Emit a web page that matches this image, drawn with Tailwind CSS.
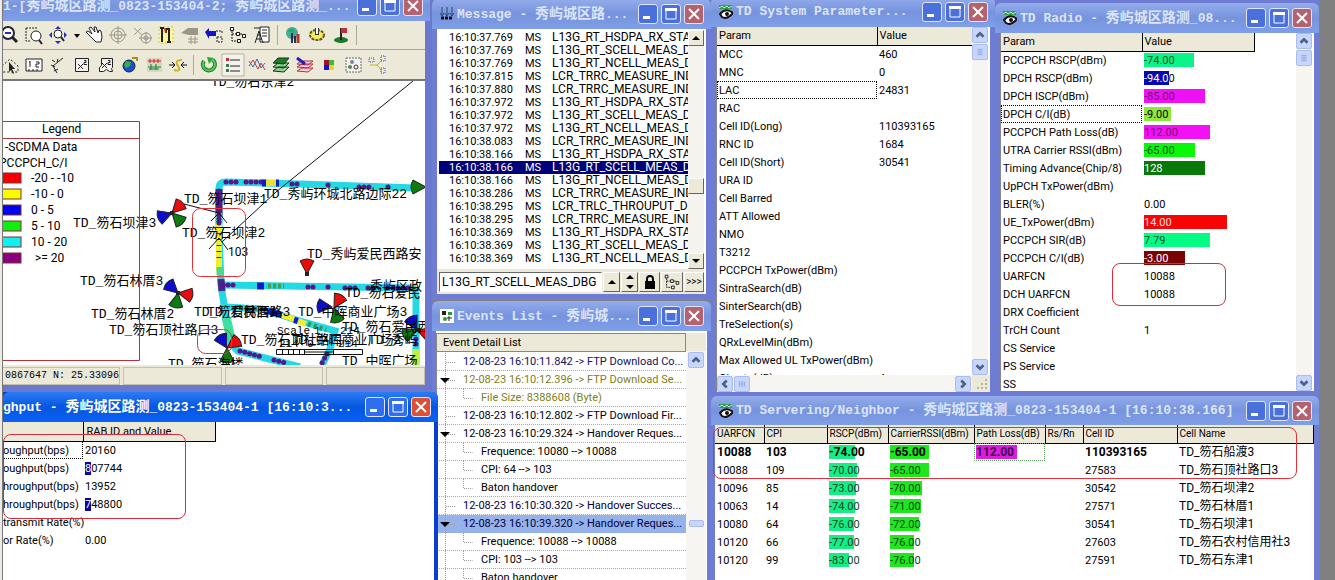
<!DOCTYPE html>
<html lang="zh-CN">
<head>
    <meta charset="UTF-8" />
    <meta name="viewport" content="width=device-width, initial-scale=1.0" />
    <title>TD Drive Test</title>
    <script src="https://cdn.jsdelivr.net/npm/@tailwindcss/browser@4"></script>
</head>

<body class="bg-[#808080] text-black text-[11px] leading-[13px] font-['Roboto','Noto_Sans_CJK_SC',sans-serif]">

  <!-- Shared symbols -->
  <svg class="hidden">
    <symbol id="eye" viewBox="0 0 14 14">
      <path d="M0 0h13v4H0z" fill="#2f9a4a"/><path d="M0 3l3-2 2 2 3-2 2 2 3-2" stroke="#c8f0d0" fill="none"/>
      <path d="M1 9Q7 2 14 8Q8 15 3 12Z" fill="#fff" stroke="#111" stroke-width="2"/><circle cx="8" cy="9" r="2" fill="#111"/>
    </symbol>
    <symbol id="up" viewBox="0 0 16 16"><path d="M4 10l4-4 4 4" fill="none" stroke="#4d6185" stroke-width="3"/></symbol>
    <symbol id="down" viewBox="0 0 16 16"><path d="M4 6l4 4 4-4" fill="none" stroke="#4d6185" stroke-width="3"/></symbol>
    <symbol id="left" viewBox="0 0 16 16"><path d="M10 4L6 8l4 4" fill="none" stroke="#4d6185" stroke-width="3"/></symbol>
    <symbol id="right" viewBox="0 0 16 16"><path d="M6 4l4 4-4 4" fill="none" stroke="#4d6185" stroke-width="3"/></symbol>
    <symbol id="gripv" viewBox="0 0 16 16"><path d="M5 5h6M5 7h6M5 9h6M5 11h6" stroke="#8ba4e0"/></symbol>
    <symbol id="griph" viewBox="0 0 16 16"><path d="M5 5v6M7 5v6M9 5v6M11 5v6" stroke="#8ba4e0"/></symbol>
    <symbol id="tree" viewBox="0 0 20 20"><path d="M4 3v13h5M4 9h6M12 9h3" fill="none" stroke="#111" stroke-dasharray="2 1"/><path d="M2.500 2.500h3v3h-3zM8.500 7.500h3v3h-3zM14.500 9.500h3v3h-3zM9.500 14.500h3v3h-3z" fill="#fff" stroke="#111"/></symbol>
  </svg>

  <div class="grid grid-cols-[3px_429fr_279fr_608fr_16px] h-screen min-h-[580px] overflow-hidden">
    <div class="bg-[#eeeae4] border-r border-[#777]"></div>

    <!-- Left: map and throughput -->
    <div class="flex flex-col min-w-0 bg-[#6a78d0]">
      <section class="h-[391px] shrink-0 flex flex-col mr-[2px]">
        <header data-title="1-[|秀屿城区路测|_0823-153404-2; |秀屿城区路测|_..." data-icon="" class="-mt-[9px] h-[30px] shrink-0"></header>
        <div class="flex-1 min-h-0 mr-[5px] mb-[6px] flex flex-col bg-[#ece9d8]">
          <div class="h-[29px] flex items-center border-b border-[#aca899] overflow-hidden">
            <div class="flex items-center -ml-[5px]" id="tools1"></div>
          </div>
          <div class="h-[31px] flex items-center border-b-2 border-[#777] overflow-hidden">
            <div class="flex items-center -ml-[5px]" id="tools2"></div>
          </div>
          <div class="flex-1 min-h-0 bg-white overflow-hidden">
            <svg class="w-full h-full font-['Liberation_Mono','Noto_Sans_CJK_SC',monospace] text-[13px]">
              <defs><path id="wedge" d="M0 0L-7 -13Q0 -17 7 -13Z" stroke="#222" stroke-width="1"/></defs>
              <g transform="translate(-3 -82)">
                <!-- drive route -->
                <g fill="none" stroke="#24d8e4" stroke-width="7">
                  <path d="M219 235V189Q219 183 226 183L300 185L416 189"/>
                  <path d="M219 235L221 286L226 318L232 346L238 352L300 368"/>
                  <path d="M222 286L412 289Q416 290 416 300V366"/>
                  <path d="M226 308L262 310L300 322L335 332L330 350L322 366"/>
                </g>
                <path d="M226 318L231 340" stroke="#3de0a0" stroke-width="9"/>
                <path d="M219 190V218M221 280L222 292" stroke="#44268c" stroke-width="7"/>
                <path d="M219 221V272" stroke="#f0ee30" stroke-width="6"/>
                <path d="M219 214V224M220 268V276" stroke="#4ad890" stroke-width="7"/>
                <path d="M416 350V366" stroke="#bdf03c" stroke-width="7"/>
                <g fill="none" stroke="#53188a" stroke-width="5" stroke-linecap="round" stroke-dasharray="0 5">
                  <path d="M226 183H238M246 183H262M292 185L300 185M328 186H332M359 188H370M388 188H392"/>
                  <path d="M223 286H238M308 288H314M328 288H332M345 289H358M368 289H376M388 289H412"/>
                  <path d="M240 352L262 358M274 361L286 364M416 340V350M327 355L322 364"/>
                  <path d="M219 192V228" stroke-dasharray="0 4"/>
                </g>
                <path d="M264 184H276" stroke="#e9e22f" stroke-width="6"/>
                <path d="M262 184H266M276 184H279M257 287H264" stroke="#1217d0" stroke-width="7"/>
                <path d="M268 287H284" stroke="#46a04a" stroke-width="5" stroke-dasharray="3 2"/>
                <path d="M268 312L282 316M294 321L298 322" stroke="#1217d0" stroke-width="6"/>
                <path d="M282 316L294 320M298 322L306 325" stroke="#f0ee30" stroke-width="6"/>
                <path d="M232 309L262 310" stroke="#2c7a55" stroke-width="4" stroke-dasharray="4 3"/>
                <path d="M308 325L326 331" stroke="#2a9a5a" stroke-width="5" stroke-dasharray="3 3"/>
                <path d="M219 222V262" stroke="#333" stroke-width="5" stroke-dasharray="1 5"/>
                <path d="M413 82L276 193L222 243M184 205L219 214M211 222l8-8 8 10M209 250l10-11 9 12" fill="none" stroke="#111"/>

                <!-- cell sectors -->
                <g fill="#e80c0c">
                  <use href="#wedge" transform="translate(172 214) rotate(45)"/>
                  <use href="#wedge" transform="translate(178 294) rotate(100)"/>
                  <use href="#wedge" transform="translate(307 275)"/>
                  <use href="#wedge" transform="translate(334 309) rotate(30)"/>
                  <use href="#wedge" transform="translate(417 331) rotate(110)"/>
                  <use href="#wedge" transform="translate(227 349) rotate(55)"/>
                </g>
                <g fill="#0c0ccc">
                  <use href="#wedge" transform="translate(172 214) rotate(-110)"/>
                  <use href="#wedge" transform="translate(178 294) rotate(-48)"/>
                  <use href="#wedge" transform="translate(332 308) rotate(-85)"/>
                  <use href="#wedge" transform="translate(417 331) rotate(-28)"/>
                  <use href="#wedge" transform="translate(227 349) rotate(-30)"/>
                </g>
                <g fill="#0f7a0f">
                  <use href="#wedge" transform="translate(172 214) rotate(135)"/>
                  <use href="#wedge" transform="translate(178 294) rotate(190)"/>
                  <use href="#wedge" transform="translate(334 309) rotate(165)"/>
                  <use href="#wedge" transform="translate(417 331) rotate(-112)"/>
                  <use href="#wedge" transform="translate(227 349) rotate(180)"/>
                  <use href="#wedge" transform="translate(426 188) rotate(-90)"/>
                </g>
                <path d="M170 212h4v4h-4zM176 292h4v4h-4zM305 273h4v4h-4zM415 329h4v4h-4z" fill="#222"/>

                <!-- site names -->
                <text x="211" y="87">TD_笏石东津2</text>
                <text x="184" y="204">TD_笏石坝津1</text>
                <text x="264" y="199">TD_秀屿环城北路边际22</text>
                <text x="73" y="228">TD_笏石坝津3</text>
                <text x="182" y="238">TD_笏石坝津2</text>
                <text x="228" y="257" class="text-[12px] font-['Roboto']">103</text>
                <text x="307" y="259">TD_秀屿爱民西路安</text>
                <text x="80" y="286">TD_笏石林厝3</text>
                <text x="91" y="319">TD_笏石林厝2</text>
                <text x="109" y="335">TD_笏石顶社路口3</text>
                <text x="370" y="291">秀屿区政</text>
                <text x="345" y="298">TD_笏石爱民</text>
                <text x="194" y="317">TD_笏石林厝1</text>
                <text x="207" y="317">TD_爱民西路3</text>
                <text x="298" y="317">TD_中晖商业广场3</text>
                <text x="342" y="332">TD_笏石爱民西</text>
                <g class="text-[11px]">
                  <text x="277" y="335">Scale</text>
                  <text x="314" y="335">1</text>
                  <text x="340" y="335">214</text>
                  <text x="279" y="348">214</text>
                  <text x="307" y="348">0</text>
                  <text x="338" y="348">214</text>
                </g>
                <text x="241" y="345">TD_笏石顶社路口</text>
                <text x="292" y="345">TD_中晖商业广场2</text>
                <text x="368" y="345">TD_秀屿</text>
                <text x="342" y="366">TD_中晖广场</text>
                <text x="168" y="369">TD_笏石海楼</text>
                <path d="M276.500 350.500h86v5h-86zM282.500 350v5M288.500 350v5M293.500 350v5M299.500 350v5M304.500 350v5M333.500 350v5M304 353h29" fill="none" stroke="#111"/>
                <g fill="none" stroke="#e23038">
                  <rect x="192.500" y="209.500" width="53" height="68" rx="8"/>
                  <rect x="197.500" y="330.500" width="34" height="24" rx="8"/>
                </g>

                <!-- legend -->
                <path d="M3 122.500H139.500V361.500H3M3 139.500H139" fill="none" stroke="#b8303c"/>
                <g class="text-[12px] font-['Roboto']">
                  <text x="42" y="134">Legend</text>
                  <text x="5" y="152">-SCDMA Data</text>
                  <text x="-1" y="168">PCCPCH_C/I</text>
                  <text x="31" y="183">-20 - -10</text>
                  <text x="31" y="199">-10 - 0</text>
                  <text x="31" y="215">0 - 5</text>
                  <text x="31" y="231">5 - 10</text>
                  <text x="31" y="247">10 - 20</text>
                  <text x="35" y="263">&gt;= 20</text>
                </g>
                <g stroke="#7a3030">
                  <rect x="0" y="174" width="21" height="10" fill="#f00000"/>
                  <rect x="0" y="190" width="21" height="10" fill="#fcfc00"/>
                  <rect x="0" y="206" width="21" height="10" fill="#0000f0"/>
                  <rect x="0" y="222" width="21" height="10" fill="#10f010"/>
                  <rect x="0" y="238" width="21" height="10" fill="#10f0f0"/>
                  <rect x="0" y="254" width="21" height="10" fill="#880080"/>
                </g>
              </g>
            </svg>
          </div>
          <div class="h-[20px] flex gap-[3px] pt-[2px] font-['Liberation_Mono',monospace] text-[10px] leading-[16px]">
            <span class="w-[117px] pl-[2px] border border-[#c4c0b0] border-l-0 whitespace-pre">0867647 N: 25.33096</span>
            <span class="flex-1 border border-[#c4c0b0]"></span>
            <span class="flex-1 border border-[#c4c0b0]"></span>
            <span class="flex-1 border border-[#c4c0b0]"></span>
          </div>
        </div>
      </section>

      <section class="flex-1 min-h-0 flex flex-col relative z-10 -mr-[6px] mt-px bg-[#0a3ed0] rounded-tr-md">
        <header data-title="ghput - |秀屿城区路测|_0823-153404-1 [16:10:3..." data-icon="" data-active="1" class="h-[30px] shrink-0"></header>
        <div class="flex-1 min-h-0 mr-[4px] bg-white overflow-hidden relative">
          <table class="table-fixed w-[213px] border-collapse whitespace-nowrap">
            <colgroup><col class="w-[80px]"><col></colgroup>
            <thead>
              <tr class="h-[19px] bg-[#ece9d8] text-left">
                <th class="border-r border-b border-black"></th>
                <th class="font-normal border-r border-b border-black pl-[3px]">RAB ID and Value</th>
              </tr>
            </thead>
            <tbody id="throughput"></tbody>
          </table>
          <div class="absolute left-0 top-[12px] w-[183px] h-[85px] border border-[#d42c3c] rounded-lg"></div>
        </div>
      </section>
    </div>

    <!-- Middle: messages and events -->
    <div class="flex flex-col min-w-0">
      <section class="h-[300px] shrink-0 flex flex-col bg-[#6f7cd4]">
        <header data-title="Message - |秀屿城区路|..." data-icon="msg" class="-mt-px h-[30px] shrink-0"></header>
        <div class="flex-1 min-h-0 mx-[5px] mb-[6px] bg-white flex flex-col pr-[2px]">
          <div class="flex h-[240px]">
            <ul id="messages" class="flex-1 min-w-0 overflow-hidden whitespace-pre pt-[2px] pl-[2px]"></ul>
            <div class="w-[16px] mt-px flex flex-col items-center bg-[#f4f3ee]">
              <button aria-label="Scroll up" class="size-4 bg-[#ece9d8] border border-white border-r-[#666] border-b-[#666] flex justify-center items-center"><svg width="8" height="4"><path d="M0 4L4 0L8 4Z"/></svg></button>
              <div class="flex-[130]"></div>
              <div class="size-4 bg-[#ece9d8] border border-white border-r-[#666] border-b-[#666]"></div>
              <div class="flex-[58]"></div>
              <button aria-label="Scroll down" class="size-4 bg-[#ece9d8] border border-white border-r-[#666] border-b-[#666] flex justify-center items-center"><svg width="8" height="4"><path d="M0 0H8L4 4Z"/></svg></button>
            </div>
          </div>
          <div class="flex-1 flex items-center gap-px bg-[#ece9d8] pl-[2px]">
            <input aria-label="Message name" value="L13G_RT_SCELL_MEAS_DBG" class="flex-1 min-w-0 h-[20px] bg-white border border-[#666] border-r-white border-b-white px-[2px] text-[12px]">
            <button aria-label="Up" class="w-[17px] h-[20px] border border-white border-r-[#666] border-b-[#666] flex justify-center items-center"><svg width="8" height="4"><path d="M0 4L4 0L8 4Z"/></svg></button>
            <button aria-label="Step" class="w-[17px] h-[20px] border border-white border-r-[#666] border-b-[#666] flex justify-center items-center"><svg width="8" height="14"><path d="M0 4L4 0L8 4ZM0 10H8L4 14Z"/></svg></button>
            <button aria-label="Lock" class="w-[21px] h-[20px] border border-white border-r-[#666] border-b-[#666] flex justify-center items-center"><svg width="12" height="14"><path d="M1 6h10v8H1z"/><path d="M3 7V4Q3 1 6 1T9 4V7" fill="none" stroke="#000" stroke-width="2"/></svg></button>
            <button aria-label="Tree" class="w-[22px] h-[20px] border border-white border-r-[#666] border-b-[#666] flex justify-center items-center"><svg width="18" height="18"><use href="#tree"/></svg></button>
            <button class="w-[20px] h-[20px] border border-white border-r-[#666] border-b-[#666] text-[10px] leading-none">&gt;&gt;&gt;</button>
          </div>
        </div>
      </section>

      <section class="flex-1 min-h-0 flex flex-col bg-[#6f7cd4] mt-px">
        <header data-title="Events List - |秀屿城|..." data-icon="evt" class="h-[30px] shrink-0"></header>
        <div class="flex-1 min-h-0 mx-[4px] bg-white flex overflow-hidden pt-[2px] pr-px">
          <div class="flex-1 min-w-0 border-l border-[#888]">
            <div class="h-[19px] leading-[18px] bg-[#ece9d8] border-t border-r border-b border-[#8a877c] pl-[6px]">Event Detail List</div>
            <ul id="events" class="pt-px"></ul>
          </div>
          <div class="w-[20px] flex flex-col items-center bg-[#f6f5f1]">
            <div class="w-full h-[18px] bg-[#ece9d8]"></div>
            <button aria-label="Scroll up" class="size-4 mt-px rounded-xs bg-[#c8d6fb] border border-[#a9bdf0]"><svg width="14" height="14"><use href="#up"/></svg></button>
            <div class="mt-[152px] w-[15px] h-[7px] rounded-xs bg-[#c8d6fb] border border-[#a9bdf0]"></div>
          </div>
        </div>
      </section>
    </div>

    <!-- Right: parameters, radio, neighbours -->
    <div class="flex flex-col min-w-0 bg-[#6a78d0]">
      <div class="h-[396px] shrink-0 grid grid-cols-[284fr_324fr]">
        <section class="min-h-0 min-w-0 flex flex-col bg-[#6f7cd4]">
          <header data-title="TD System Parameter..." data-icon="eye" class="-mt-[3px] h-[30px] shrink-0"></header>
          <div class="flex-1 min-h-0 mx-[5px] mb-[4px] bg-white flex flex-col border-l border-[#888]">
            <div class="flex-1 min-h-0 flex pr-[2px]">
              <div class="flex-1 min-w-0 overflow-hidden">
                <table class="table-fixed w-full border-collapse whitespace-nowrap">
                  <colgroup><col class="w-[160px]"><col></colgroup>
                  <thead>
                    <tr class="h-[18px] bg-[#ece9d8] text-left">
                      <th class="font-normal border-r border-b border-black pl-[2px]">Param</th>
                      <th class="font-normal border-b border-black pl-[2px]">Value</th>
                    </tr>
                  </thead>
                  <tbody id="system"></tbody>
                </table>
              </div>
              <div class="w-[16px] flex flex-col gap-px bg-[#f6f5f1]">
                <button aria-label="Scroll up" class="size-4 rounded-xs bg-[#c8d6fb] border border-[#a9bdf0]"><svg width="14" height="14"><use href="#up"/></svg></button>
                <div class="size-4 rounded-xs bg-[#c8d6fb] border border-[#a9bdf0]"><svg width="14" height="14"><use href="#gripv"/></svg></div>
                <button aria-label="Scroll down" class="size-4 mt-auto rounded-xs bg-[#c8d6fb] border border-[#a9bdf0]"><svg width="14" height="14"><use href="#down"/></svg></button>
              </div>
            </div>
            <div class="h-[17px] flex gap-px items-center bg-[#f6f5f1]">
              <button aria-label="Scroll left" class="size-4 rounded-xs bg-[#c8d6fb] border border-[#a9bdf0]"><svg width="14" height="14"><use href="#left"/></svg></button>
              <div class="size-4 rounded-xs bg-[#c8d6fb] border border-[#a9bdf0]"><svg width="14" height="14"><use href="#griph"/></svg></div>
              <button aria-label="Scroll right" class="size-4 ml-auto rounded-xs bg-[#c8d6fb] border border-[#a9bdf0]"><svg width="14" height="14"><use href="#right"/></svg></button>
              <svg width="18" height="17" class="bg-[#ece9d8]"><path d="M13 4h2v2h-2zM9 8h2v2H9zM13 8h2v2h-2zM5 12h2v2H5zM9 12h2v2H9zM13 12h2v2h-2z" fill="#b8b4a2"/></svg>
            </div>
          </div>
        </section>

        <section class="min-h-0 min-w-0 flex flex-col bg-[#6f7cd4] pt-[3px]">
          <header data-title="TD Radio - |秀屿城区路测|_08..." data-icon="eye" class="h-[30px] shrink-0"></header>
          <div class="flex-1 min-h-0 mx-[5px] mb-[5px] bg-white flex border-l border-[#888] pr-[2px] relative">
            <div class="flex-1 min-w-0 overflow-hidden">
              <table class="table-fixed w-[254px] border-collapse whitespace-nowrap">
                <colgroup><col class="w-[141px]"><col></colgroup>
                <thead>
                  <tr class="h-[18px] bg-[#ece9d8] text-left">
                    <th class="font-normal border-r border-b border-black pl-[2px]">Param</th>
                    <th class="font-normal border-r border-b border-black pl-[2px]">Value</th>
                  </tr>
                </thead>
                <tbody id="radio"></tbody>
              </table>
            </div>
            <div class="w-[16px] flex flex-col gap-px bg-[#f6f5f1]">
              <button aria-label="Scroll up" class="size-4 rounded-xs bg-[#c8d6fb] border border-[#a9bdf0]"><svg width="14" height="14"><use href="#up"/></svg></button>
              <div class="size-4 rounded-xs bg-[#c8d6fb] border border-[#a9bdf0]"><svg width="14" height="14"><use href="#gripv"/></svg></div>
              <button aria-label="Scroll down" class="size-4 mt-auto rounded-xs bg-[#c8d6fb] border border-[#a9bdf0]"><svg width="14" height="14"><use href="#down"/></svg></button>
            </div>
            <div class="absolute left-[111px] top-[230px] w-[114px] h-[43px] border border-[#d42c3c] rounded-lg"></div>
          </div>
        </section>
      </div>

      <section class="flex-1 min-h-0 flex flex-col bg-[#6f7cd4]">
        <header data-title="TD Servering/Neighbor - |秀屿城区路测|_0823-153404-1 [16:10:38.166]" data-icon="eye" class="h-[29px] shrink-0"></header>
        <div class="flex-1 min-h-0 ml-[4px] mr-[5px] bg-white flex flex-col relative">
          <div class="flex-1 min-h-0 overflow-hidden">
            <table class="table-fixed w-full border-collapse whitespace-nowrap">
              <colgroup><col class="w-[49px]"><col class="w-[63px]"><col class="w-[61px]"><col class="w-[86px]"><col class="w-[71px]"><col class="w-[38px]"><col class="w-[94px]"><col></colgroup>
              <thead>
                <tr class="h-[18px] bg-[#ece9d8] text-left text-[10px] [&>th]:font-normal [&>th]:border-r [&>th]:border-b [&>th]:border-black [&>th]:pl-[2px]">
                  <th>UARFCN</th><th>CPI</th><th>RSCP(dBm)</th><th>CarrierRSSI(dBm)</th><th>Path Loss(dB)</th><th>Rs/Rn</th><th>Cell ID</th><th>Cell Name</th>
                </tr>
              </thead>
              <tbody id="cells"></tbody>
            </table>
          </div>
          <div class="h-[6px] flex gap-px bg-[#f6f5f1] overflow-hidden">
            <div class="size-4 rounded-xs bg-[#c8d6fb] border border-[#a9bdf0]"><svg width="14" height="14"><use href="#left"/></svg></div>
            <div class="size-4 rounded-xs bg-[#c8d6fb] border border-[#a9bdf0]"></div>
            <div class="size-4 ml-auto rounded-xs bg-[#c8d6fb] border border-[#a9bdf0]"><svg width="14" height="14"><use href="#right"/></svg></div>
          </div>
          <div class="absolute -left-[2px] top-[2px] w-[584px] h-[52px] border border-[#e2303c] rounded-lg"></div>
        </div>
      </section>
    </div>

    <div class="bg-[#808080]"></div>
  </div>

  <script>
    const $ = id => document.getElementById(id);

    // Title bars. Parts between | are Chinese and set one size larger.
    const titleIcons = {
      eye: '<svg width="14" height="14" class="shrink-0"><use href="#eye"/></svg>',
      evt: '<svg width="14" height="14" class="shrink-0"><path d="M0 0h14v14H0z" fill="#fff"/><path d="M2 2h4v4H2z" fill="#222"/><path d="M8 3h4v3H8z" fill="#2a9a3a"/><circle cx="5" cy="10" r="2" fill="#2a9a3a"/><path d="M7 9h5M9 7v5" stroke="#222"/></svg>',
      msg: '<svg width="14" height="14" class="shrink-0"><path d="M2 0v8M7 0v8M12 0v8M0 6l2 3 2-3M5 6l2 3 2-3M10 6l2 3 2-3" stroke="#2a4a70" fill="none"/><path d="M1 11h12" stroke="#111" stroke-width="3" stroke-dasharray="3 1"/></svg>'
    };
    document.querySelectorAll("header[data-title]").forEach(h => {
      const active = h.dataset.active;
      const text = h.dataset.title.split("|").map((t, i) => i % 2 ? `<span class="text-[14px]">${t}</span>` : t).join("");
      const btn = active ? "bg-[#2f6ef0]" : "bg-[#4a70dc]";
      const close = active ? "bg-[#dc5038]" : "bg-[#b5626e]";
      const box = "size-5 rounded-[3px] border border-[#dfe6fb] flex items-center justify-center";
      h.innerHTML = `
        <div class="h-full flex items-center gap-[3px] pr-[7px] rounded-t-md ${h.dataset.icon ? "pl-[8px]" : ""} ${active ? "bg-linear-to-b from-[#2a7cf4] via-[#0656e0] to-[#0a62f4]" : "bg-linear-to-b from-[#93aceb] via-[#7793dd] to-[#7f9fe8]"}">
          ${titleIcons[h.dataset.icon] || ""}
          <h2 class="flex-1 min-w-0 overflow-hidden whitespace-pre font-bold text-[13px] leading-5 font-['Liberation_Mono','Noto_Sans_CJK_SC',monospace] ${active ? "text-white" : "text-[#dbe5fa]"}">${text}</h2>
          <button aria-label="Minimize" class="${box} ${btn}"><svg width="12" height="12"><path d="M1 8h7v3H1z" fill="#fff"/></svg></button>
          <button aria-label="Maximize" class="${box} ${btn}"><svg width="12" height="12"><path d="M1 1h10v10H1z" fill="none" stroke="#fff"/><path d="M0 0h12v3H0z" fill="#fff"/></svg></button>
          <button aria-label="Close" class="${box} ${close}"><svg width="12" height="12"><path d="M1 1l10 10M11 1L1 11" stroke="#fff" stroke-width="2"/></svg></button>
        </div>`;
    });

    // Toolbar icons, 24px boxes. "|" is a separator.
    const globe = '<circle cx="11" cy="13" r="6" fill="#1a50c8" stroke="#124"/><path d="M8 8l5 1-1 4-4 2-2-3z" fill="#35b04a"/>';
    const row1 = [
      ["Zoom out", '<circle cx="10" cy="10" r="6" fill="#fff" stroke="#223" stroke-width="2"/><path d="M7 10h6" stroke="#2a2ac0" stroke-width="2"/><path d="M14 14l5 5" stroke="#223" stroke-width="3"/>'],
      ["Zoom area", '<path d="M4 5h12M4 5v13h5" fill="none" stroke="#222" stroke-dasharray="2 1"/><circle cx="14" cy="13" r="5" fill="#fff" stroke="#222"/><path d="M17 17l3 4" stroke="#222" stroke-width="2"/>'],
      ["Zoom extent", '<circle cx="12" cy="11" r="4" fill="#fff" stroke="#222"/><path d="M15 14l3 4" stroke="#222" stroke-width="2"/><path d="M9 6l3-3 3 3zM9 18l3 3 3-3zM6 9l-3 3 3 3zM18 9l3 3-3 3z" fill="#2a2ac0"/>'],
      "v",
      ["Pan", '<path d="M7 12L4 9l2-1 4 3-3-6 2-1 4 5-1-5 2 0 2 6 1-3 2 1 1 6-1 5h-5z" fill="#fff" stroke="#222"/>'],
      ["Target", '<circle cx="12" cy="12" r="7" fill="none" stroke="#9a978a"/><circle cx="12" cy="12" r="4" fill="none" stroke="#9a978a"/><path d="M12 3v18M3 12h18" stroke="#9a978a"/>'],
      ["Clear target", '<path d="M4 5l8 7M11 5L4 12" stroke="#9a978a"/><circle cx="16" cy="15" r="5" fill="none" stroke="#9a978a"/><circle cx="16" cy="15" r="2" fill="none" stroke="#9a978a"/><path d="M9 15h13M16 9v12" stroke="#9a978a"/>'],
      ["Route", '<path d="M5 4h14v16H5z" fill="#fdf6a0" stroke="#cc5" stroke-dasharray="2 2"/><path d="M8 19V5M6 5h4M12 10V6h3v13M13 19h4" fill="none" stroke="#222" stroke-width="2"/><path d="M11 5l1 5" stroke="#c22" stroke-width="2"/>'],
      ["Hide", '<path d="M3 10l7-5h10v7H11z" fill="#9a978a"/><path d="M10 16h10M10 19h10M13 13v8M17 13v8" stroke="#9a978a"/>'],
      ["Flag view", '<path d="M3 9l4-4v3h7v5H7v3z" fill="#1212c8"/><path d="M14 8h6v3M15 14h5v5h-5z" fill="none" stroke="#222" stroke-dasharray="2 1"/>'],
      ["Tree", '<use href="#tree" x="2" y="2" width="20" height="20"/>'],
      ["Report", '<path d="M10 4h9v15h-9z" fill="#fff" stroke="#222"/><path d="M12 7h5M12 10h5M12 13h5" stroke="#222"/><path d="M4 5h6M5 20l4-12 4 12M6 16h6M7 12h4" stroke="#222" fill="none"/>'],
      "|",
      ["Statistics", '<circle cx="11" cy="10" r="6" fill="#4a9"/><path d="M6 8l5-3 3 5z" fill="#2a6"/><path d="M11 10v10M14 13v7" stroke="#234" stroke-width="2"/><path d="M17 11v9" stroke="#b33" stroke-width="3"/>'],
      ["Settings", '<ellipse cx="12" cy="12" rx="7" ry="5" fill="#f2e95c" stroke="#665a10" stroke-width="2" stroke-dasharray="3 1"/><path d="M12 5v7" stroke="#333" stroke-width="4"/><path d="M12 5v6" stroke="#fff" stroke-width="2"/>'],
      ["Flag", '<ellipse cx="12" cy="17" rx="7" ry="3" fill="#1d7a2a"/><path d="M12 5v12" stroke="#222" stroke-width="2"/><path d="M12 5h6v5h-6z" fill="#b8323c"/>'],
      "|"
    ];
    const row2 = [
      ["Select", '<path d="M4 13l8-7 8 7v6H4z" fill="none" stroke="#222" stroke-dasharray="2 2"/><path d="M11 9v10l2-2 2 4 1-1-2-4h3z" fill="#222"/>'],
      ["Ruler", '<path d="M4 6h16v12H4z" fill="#fff" stroke="#222"/><path d="M8 8v6M7 9h1M14 9h3v2h-3v3h3M7 18v-2M11 18v-2M15 18v-2" fill="none" stroke="#222"/>'],
      ["Measure", '<path d="M17 5L7 13l4 7M9 9l-3-2M12 6l-1 3M5 12l4 2M8 18l4-2" fill="none" stroke="#222"/>'],
      ["Formula", '<path d="M5.500 5.500h13v13h-13z" fill="#f4f2ea" stroke="#222"/><path d="M8 11l5 5M13 11l-5 5M14 7.500h2v2h-2v2h3" fill="none" stroke="#222"/>'],
      ["Formula range", '<path d="M7.500 5.500h11v9l-1 1 1 3h-3l-3-2-3 2h-4v-4l2-2z" fill="#f4f2ea" stroke="#222"/><path d="M8 10l5 5M13 10l-5 5M14 7.500h2v2h-2v2h3" fill="none" stroke="#222"/>'],
      ["Globe", globe + '<path d="M14 5h5v3" fill="none" stroke="#a89020" stroke-width="2"/>'],
      ["Compare", '<path d="M5 5h15v14H5z" fill="#d8d5c4"/><path d="M6 8h13M8 6v4M12 6v4M16 6v4" stroke="#d22"/><path d="M6 14h13M9 11v6M14 11v6M7 16h10" stroke="#183"/>'],
      ["Swap", '<path d="M3 12h6M15 12h6M6 9l3 3-3 3M18 9l-3 3 3 3" fill="none" stroke="#111"/><path d="M8 17q8 2 4-4t4-6" fill="none" stroke="#c8b820" stroke-width="2"/>'],
      "|",
      ["Refresh", '<path d="M7 8a6 6 0 1 0 9-1" fill="none" stroke="#1d7a2a" stroke-width="4"/><path d="M7 8a6 6 0 1 0 9-1" fill="none" stroke="#4ccc58" stroke-width="2"/><path d="M10 4l7 1-5 6z" fill="#2aa83a"/>'],
      ["List", '<path d="M1 1h22v22H1z" fill="#f4f2ea" stroke="#b5b1a0"/><path d="M9 7h10M9 13h10M9 18h10" stroke="#222"/><path d="M5 5h3v3H5z" fill="#b33"/><path d="M5 11h3v3H5zM5 16h3v3H5z" fill="#3a7a4a"/>'],
      ["Curve", '<path d="M4 8l4 6 4-8 4 9 4-5" fill="none" stroke="#2a70b8"/><path d="M4 13l4-6 5 9 3-6 4 7" fill="none" stroke="#c23a4a"/>'],
      ["Layers", '<path d="M4 18l5-4h11l-5 5zM4 14l5-4h11l-5 5z" fill="#8fd08f" stroke="#0c3a12"/><path d="M4 10l5-5h11l-5 6z" fill="#1f7a2c" stroke="#0c3a12"/>'],
      ["Layer edit", '<path d="M4 18l5-3h11l-5 4zM4 14l5-3h11l-5 4zM4 11l4-3h12l-5 4z" fill="#fbd0e0" stroke="#b8303c"/><path d="M4 5l8 6" stroke="#2222b8" stroke-width="3"/>'],
      ["Colors", '<path d="M7 7h5v5H7z" fill="#a0142a"/><path d="M12 7h5v5h-5z" fill="#38c030"/><path d="M7 12h5v5H7z" fill="#1414c8"/><path d="M12 12h5v5h-5z" fill="#f0d020"/>'],
      ["Nodes", '<path d="M5 5h15v14H5z" fill="#f4f2ea" stroke="#666" stroke-dasharray="2 1"/><circle cx="11" cy="9" r="2" fill="#789"/><circle cx="9" cy="14" r="2" fill="#4a8a5a"/><circle cx="15" cy="14" r="2" fill="none" stroke="#333"/>'],
      ["Links", '<path d="M5 12h7l5-5M12 12l5 6" fill="none" stroke="#c8b820"/><path d="M4 5h5v4H4zM16 3h4v5h-4zM16 15h4v5h-4z" fill="none" stroke="#3a48b8" stroke-dasharray="1 1"/>']
    ];
    const tool = t => t === "|" ? '<span class="w-[7px] h-[20px] flex justify-center"><i class="w-px bg-[#aca899]"></i></span>'
      : t === "v" ? '<svg width="12" height="24"><path d="M4 11h6l-3 4z"/></svg>'
      : `<button aria-label="${t[0]}" class="size-6"><svg width="24" height="24">${t[1]}</svg></button>`;
    $("tools1").innerHTML = row1.map(tool).join("");
    $("tools2").innerHTML = row2.map(tool).join("");

    // Throughput
    $("throughput").innerHTML = [
      ["oughput(bps)", "20160"], ["oughput(bps)", "807744", 1], ["hroughput(bps)", "13952"],
      ["hroughput(bps)", "748800", 1], ["transmit Rate(%)", ""], ["or Rate(%)", "0.00"]
    ].map(([k, v, mark], i) => `<tr class="h-[18px]">
      <td class="${i ? "" : "outline outline-dotted outline-black -outline-offset-1"}">${k}</td>
      <td class="pl-[2px]">${mark ? `<span class="inline-block bg-[#0808a0] text-white">${v[0]}</span>${v.slice(1)}` : v}</td></tr>`).join("");

    // Messages
    const H = "L13G_RT_HSDPA_RX_STATUS", S = "L13G_RT_SCELL_MEAS_DBG", N = "L13G_RT_NCELL_MEAS_DBG", M = "LCR_TRRC_MEASURE_IND", T = "LCR_TRLC_THROUPUT_DBG";
    $("messages").innerHTML = [
      ["37.769", H], ["37.769", S], ["37.769", N], ["37.815", M], ["37.880", M], ["37.972", H], ["37.972", S], ["37.972", N], ["38.083", M],
      ["38.166", H], ["38.166", S], ["38.166", N], ["38.286", M], ["38.295", T], ["38.295", M], ["38.369", H], ["38.369", S], ["38.369", N]
    ].map(([t, m], i) => `<li class="h-[13px] flex pl-[10px] ${i === 10 ? "bg-[#000078] text-white" : ""}"><span class="w-[76px] shrink-0">16:10:${t}</span><span class="w-[27px] shrink-0">MS</span><span class="text-[12px] leading-[13px]">${m}</span></li>`).join("");

    // Events: level, text, colour, arrow
    $("events").innerHTML = [
      [0, "12-08-23 16:10:11.842 -> FTP Download Co...", "text-[#101060]"],
      [0, "12-08-23 16:10:12.396 -> FTP Download Se...", "text-[#808020]", 1],
      [1, "File Size: 8388608 (Byte)", "text-[#808020]"],
      [0, "12-08-23 16:10:12.802 -> FTP Download Fir...", "text-[#000020]"],
      [0, "12-08-23 16:10:29.324 -> Handover Reques...", "text-black", 1],
      [1, "Frequence: 10080 --> 10088", "text-black"],
      [1, "CPI: 64 --> 103", "text-black"],
      [1, "Baton handover", "text-black"],
      [0, "12-08-23 16:10:30.320 -> Handover Succes...", "text-[#000040]"],
      [0, "12-08-23 16:10:39.320 -> Handover Reques...", "text-[#000040]", 1, 1],
      [1, "Frequence: 10088 --> 10088", "text-black"],
      [1, "CPI: 103 --> 103", "text-black"],
      [1, "Baton handover", "text-black"]
    ].map(([lv, t, c, arrow, sel]) => `<li class="h-[18px] flex items-center border-b border-dotted border-[#aaa] whitespace-nowrap ${sel ? "bg-[#96b2ea]" : ""}">
      <svg width="${lv ? 44 : 26}" height="18" class="shrink-0"><path d="${lv ? "M8.500 0v18M26.500 0v9.500h9" : "M8.500 0v18M9 9.500h9"}" fill="none" stroke="#999" stroke-dasharray="1 1"/>${arrow ? '<path d="M3 7h10l-5 5z"/>' : ""}</svg>
      <span class="min-w-0 overflow-hidden ${c}">${t.replace(/>/g, "&gt;")}</span></li>`).join("");

    // System parameters
    $("system").innerHTML = [
      ["MCC", "460"], ["MNC", "0"], ["LAC", "24831"], ["RAC", ""], ["Cell ID(Long)", "110393165"], ["RNC ID", "1684"], ["Cell ID(Short)", "30541"],
      ["URA ID", ""], ["Cell Barred", ""], ["ATT Allowed", ""], ["NMO", ""], ["T3212", ""], ["PCCPCH TxPower(dBm)", ""], ["SintraSearch(dB)", ""],
      ["SinterSearch(dB)", ""], ["TreSelection(s)", ""], ["QRxLevelMin(dBm)", ""], ["Max Allowed UL TxPower(dBm)", ""], ["Qhysts(dB)", "4"]
    ].map(([k, v]) => `<tr class="h-[18px]"><td class="pl-[2px] ${k === "LAC" ? "outline outline-dotted outline-black -outline-offset-1" : ""}">${k}</td><td class="pl-[2px]">${v}</td></tr>`).join("");

    // Value with a coloured bar behind it
    const bar = (v, w, bg, fg) => !w ? v : `<div class="relative h-[14px] leading-[15px]"><i class="absolute left-0 top-0 h-full ${bg}" style="width:${w}px"></i><span class="relative ${fg}">${v}</span></div>`;
    $("radio").innerHTML = [
      ["PCCPCH RSCP(dBm)", "-74.00", 50, "bg-[#0cf488]", "text-[#08502c]"],
      ["DPCH RSCP(dBm)", '<span class="text-white">-94.0</span>0', 25, "bg-[#0808b0]", ""],
      ["DPCH ISCP(dBm)", "-85.00", 61, "bg-[#f010f4]", "text-[#701078]"],
      ["DPCH C/I(dB)", "-9.00", 27, "bg-[#90e83c]", "text-black"],
      ["PCCPCH Path Loss(dB)", "112.00", 66, "bg-[#f410f4]", "text-[#701078]"],
      ["UTRA Carrier RSSI(dBm)", "-65.00", 51, "bg-[#08f808]", "text-[#085008]"],
      ["Timing Advance(Chip/8)", "128", 61, "bg-[#087808]", "text-white"],
      ["UpPCH TxPower(dBm)", ""],
      ["BLER(%)", "0.00"],
      ["UE_TxPower(dBm)", "14.00", 83, "bg-[#f80404]", "text-[#ffe0e0]"],
      ["PCCPCH SIR(dB)", "7.79", 66, "bg-[#04fc84]", "text-[#08502c]"],
      ["PCCPCH C/I(dB)", "-3.00", 41, "bg-[#780404]", "text-white"],
      ["UARFCN", "10088"], ["DCH UARFCN", "10088"], ["DRX Coefficient", ""], ["TrCH Count", "1"], ["CS Service", ""], ["PS Service", ""], ["SS", ""]
    ].map(([k, v, w, bg, fg]) => `<tr class="h-[18px]"><td class="pl-[2px] ${k === "DPCH C/I(dB)" ? "outline outline-dotted outline-black -outline-offset-1" : ""}">${k}</td><td class="pl-[2px]">${bar(v, w, bg, fg)}</td></tr>`).join("");

    // Serving and neighbour cells
    $("cells").innerHTML = [
      ["10088", "103", "-74.00", 26, "-65.00", 39, "110393165", "TD_笏石船渡3"],
      ["10088", "109", "-70.00", 28, "-65.00", 39, "27583", "TD_笏石顶社路口3"],
      ["10096", "85", "-73.00", 27, "-70.00", 32, "30542", "TD_笏石坝津2"],
      ["10063", "14", "-74.00", 26, "-71.00", 31, "27571", "TD_笏石林厝1"],
      ["10080", "64", "-76.00", 25, "-72.00", 29, "30541", "TD_笏石坝津1"],
      ["10120", "66", "-77.00", 25, "-76.00", 24, "27603", "TD_笏石农村信用社3"],
      ["10120", "99", "-83.00", 20, "-76.00", 24, "27591", "TD_笏石东津1"]
    ].map((r, i) => `<tr class="h-[18px] [&>td]:pl-[2px] ${i ? "" : "font-bold text-[12px]"}">
      <td>${r[0]}</td><td>${r[1]}</td>
      <td>${bar(r[2], r[3], "bg-[#14ee84]", i ? "text-[#104028]" : "text-black")}</td>
      <td>${bar(r[4], r[5], "bg-[#1ce81c]", i ? "text-[#104010]" : "text-black")}</td>
      <td class="${i ? "" : "outline outline-dotted outline-[#60a060] -outline-offset-1"}">${i ? "" : bar("112.00", 41, "bg-[#dc1ce0]", "text-[#400848]")}</td>
      <td></td><td>${r[6]}</td><td class="font-normal text-[12px]">${r[7]}</td></tr>`).join("");
  </script>
</body>
</html>
